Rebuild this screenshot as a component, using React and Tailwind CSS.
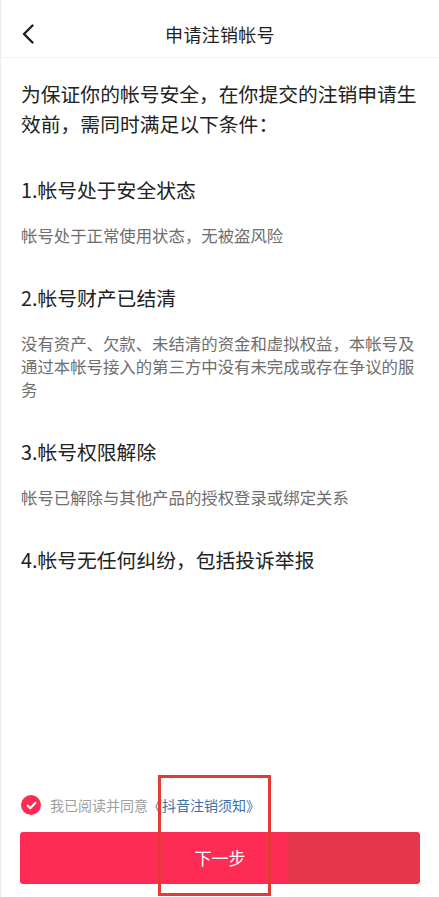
import React from 'react';

const sections = [
  { title: '1.帐号处于安全状态', desc: '帐号处于正常使用状态，无被盗风险' },
  {
    title: '2.帐号财产已结清',
    desc: '没有资产、欠款、未结清的资金和虚拟权益，本帐号及通过本帐号接入的第三方中没有未完成或存在争议的服务',
  },
  { title: '3.帐号权限解除', desc: '帐号已解除与其他产品的授权登录或绑定关系' },
  { title: '4.帐号无任何纠纷，包括投诉举报' },
];

const font = { fontFamily: '"Noto Sans CJK SC", "Noto Sans", sans-serif' };

const App = () => {
  return (
    <div
      className="relative flex flex-col h-[897px] w-[439px] bg-white border-l border-[#ececec] overflow-hidden"
      style={font}
    >
      {/* header */}
      <div className="relative flex items-center justify-center h-[58px] pt-[10px] border-b border-[#f2f2f2]">
        <svg className="absolute left-[20px] top-[24px]" width="14" height="20" viewBox="0 0 14 20" fill="none">
          <path d="M11.5 1.5 L3 10 L11.5 18.5" stroke="#1f1f1f" strokeWidth="2.4" strokeLinecap="round" strokeLinejoin="round" />
        </svg>
        <h1 className="text-[18px] leading-[24px] text-[#1f1f1f] tracking-[0.3px]">申请注销帐号</h1>
      </div>

      {/* content */}
      <div className="px-[20px] pt-[21px]">
        <p className="text-[19.8px] leading-[30px] text-[#222]">
          为保证你的帐号安全，在你提交的注销申请生效前，需同时满足以下条件：
        </p>

        {sections.map((s, i) => (
          <div key={i} className="mt-[37px]">
            <h2 className="text-[19.8px] leading-[28px] text-[#222]">{s.title}</h2>
            {s.desc && (
              <p className="mt-[20px] text-[16.4px] leading-[23px] text-[#6e6e6e]">{s.desc}</p>
            )}
          </div>
        ))}
      </div>

      <div className="flex-1" />

      {/* agree */}
      <div className="flex items-center px-[20px] h-[20px]">
        <span className="flex items-center justify-center w-[20px] h-[20px] rounded-full bg-[#fe2c55]">
          <svg width="11" height="9" viewBox="0 0 11 9" fill="none">
            <path d="M1.5 4.6 L4.3 7.2 L9.5 1.8" stroke="#fff" strokeWidth="2" strokeLinecap="round" strokeLinejoin="round" />
          </svg>
        </span>
        <span className="ml-[9px] text-[14px] leading-[20px] text-[#a0a0a0]">我已阅读并同意</span>
        <span className="text-[14px] leading-[20px] text-[#3f6fa6]">《抖音注销须知》</span>
      </div>

      {/* button */}
      <div className="px-[19px] pt-[17px] pb-[13px]">
        <button className="flex items-center justify-center w-full h-[52px] rounded-[3px] bg-[linear-gradient(90deg,#fe2c55_66.8%,#e6364b_66.8%)] text-white text-[17px]">
          下一步
        </button>
      </div>

      {/* annotation box */}
      <div className="absolute left-[157px] top-[775px] w-[113px] h-[121px] border-[3px] border-[#e53935]" />
    </div>
  );
};

export default App;
